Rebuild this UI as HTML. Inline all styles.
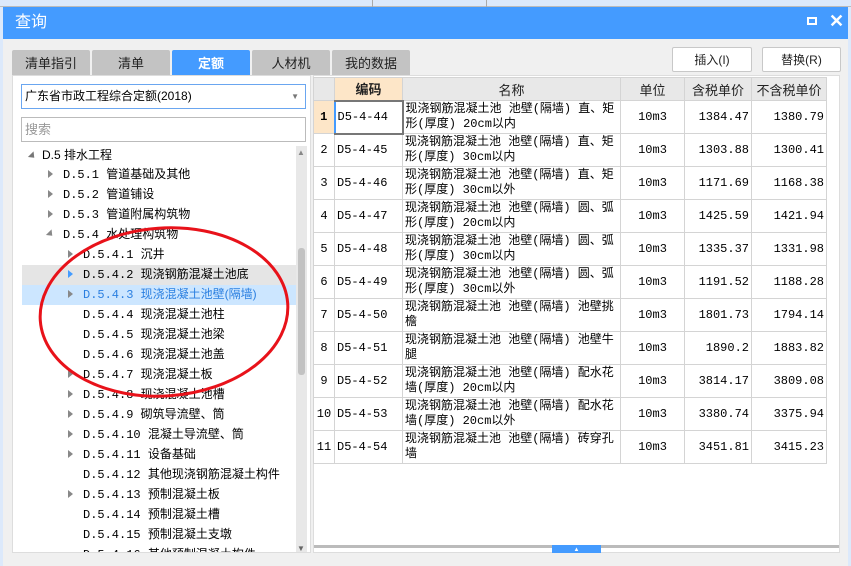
<!DOCTYPE html>
<html><head><meta charset="utf-8"><style>
*{margin:0;padding:0;box-sizing:border-box}
body{width:851px;height:566px;position:relative;overflow:hidden;background:#dce9fb;font-family:"Liberation Sans","Noto Sans CJK SC",sans-serif;font-size:12px;color:#000}
.abs{position:absolute}
#dlg{left:3px;top:7px;width:845px;height:559px;background:#f0f0f0}
#title{left:3px;top:7px;width:845px;height:32px;background:#449bff;color:#fff;font-size:16px;line-height:32px;padding-left:12px}
.tab{top:50px;height:25px;width:78px;background:#c3c3c3;text-align:center;line-height:27px;font-size:13px;color:#222;border-radius:2px 2px 0 0}
.btn{top:47px;height:25px;background:#fff;border:1px solid #c8c8c8;border-radius:2px;text-align:center;line-height:24px;font-size:12px;color:#222}
#lp{left:12px;top:75px;width:299px;height:478px;background:#fff;border:1px solid #ddd}
.tr{position:absolute;left:22px;width:274px;height:20px;line-height:20px;font-family:"Liberation Mono","Noto Sans CJK SC",monospace;font-size:12px;white-space:nowrap}
.tr span{font-family:"Liberation Sans","Noto Sans CJK SC",sans-serif}
.ar{position:absolute;width:0;height:0;border-left:5px solid #888;border-top:4px solid transparent;border-bottom:4px solid transparent;top:6px}
table{border-collapse:collapse;position:absolute;left:313px;top:77px;table-layout:fixed}
td{border:1px solid #d4d4d4;height:33px;font-family:"Liberation Mono","Noto Sans CJK SC",monospace;font-size:12px;line-height:15px;padding:0 2px;vertical-align:middle;overflow:hidden}
th{border:1px solid #d4d4d4;height:23px;background:#e8e8e8;font-weight:normal;font-size:13px;color:#222}
td.n{text-align:center;background:#fff}
td.r{text-align:right}
td.c{text-align:center}
</style></head><body>
<div class="abs" style="left:0;top:0;width:851px;height:7px;background:#dce9fb;border-bottom:1px solid #bbb"></div>
<div class="abs" style="left:372px;top:0;width:1px;height:7px;background:#aaa"></div>
<div class="abs" style="left:486px;top:0;width:1px;height:7px;background:#aaa"></div>
<div class="abs" id="dlg"></div>
<div class="abs" id="title">查询</div>
<div class="abs" style="left:807px;top:17px;width:10px;height:8px;border:2px solid #fff"></div>
<div class="abs" style="left:829px;top:10px;color:#fff;font-size:18px;font-weight:bold;line-height:22px">✕</div>
<div class="abs tab" style="left:12px">清单指引</div>
<div class="abs tab" style="left:92px">清单</div>
<div class="abs tab" style="left:172px;background:#449bff;color:#fff;font-weight:bold">定额</div>
<div class="abs tab" style="left:252px">人材机</div>
<div class="abs tab" style="left:332px">我的数据</div>
<div class="abs btn" style="left:672px;width:80px">插入(I)</div>
<div class="abs btn" style="left:762px;width:79px">替换(R)</div>
<div class="abs" id="lp"></div>
<div class="abs" style="left:21px;top:84px;width:285px;height:25px;border:1px solid #6aa6f0;background:#fff;line-height:23px;padding-left:3px;font-size:12px">广东省市政工程综合定额(2018)<span style="position:absolute;right:6px;top:0;color:#777;font-size:8px">▼</span></div>
<div class="abs" style="left:21px;top:117px;width:285px;height:25px;border:1px solid #bbb;background:#fff;line-height:23px;padding-left:3px;color:#999;font-size:13px">搜索</div>
<div class="abs" style="left:22px;top:265px;width:274px;height:20px;background:#e5e5e5"></div>
<div class="abs" style="left:22px;top:285px;width:274px;height:20px;background:#cce6ff"></div>
<div class="abs" style="left:296px;top:146px;width:11px;height:406px;background:#e8e8e8"></div>
<div class="abs" style="left:298px;top:248px;width:7px;height:127px;background:#c2c2c2;border-radius:3px"></div>
<div class="abs" style="left:297px;top:148px;color:#888;font-size:8px">▲</div>
<div class="abs" style="left:297px;top:544px;color:#666;font-size:8px">▼</div>
<div class="tr" style="top:145px;left:30px"><i class="ar" style="transform:rotate(45deg);left:0;top:7px;border-left-color:#777"></i><span style="position:absolute;left:12px">D.5 排水工程</span></div>
<div class="tr" style="top:165px"></div>
<script></script>
<div class="tr" style="top:164px;left:48px"><i class="ar"></i><b style="font-weight:normal;position:absolute;left:15px">D.5.1 <span>管道基础及其他</span></b></div>
<div class="tr" style="top:184px;left:48px"><i class="ar"></i><b style="font-weight:normal;position:absolute;left:15px">D.5.2 <span>管道铺设</span></b></div>
<div class="tr" style="top:204px;left:48px"><i class="ar"></i><b style="font-weight:normal;position:absolute;left:15px">D.5.3 <span>管道附属构筑物</span></b></div>
<div class="tr" style="top:224px;left:48px"><i class="ar" style="transform:rotate(45deg)"></i><b style="font-weight:normal;position:absolute;left:15px">D.5.4 <span>水处理构筑物</span></b></div>
<div class="tr" style="top:244px;left:68px"><i class="ar"></i><b style="font-weight:normal;position:absolute;left:15px">D.5.4.1 <span>沉井</span></b></div>
<div class="tr" style="top:264px;left:68px"><i class="ar" style="border-left-color:#449bff"></i><b style="font-weight:normal;position:absolute;left:15px">D.5.4.2 <span>现浇钢筋混凝土池底</span></b></div>
<div class="tr" style="top:284px;left:68px;color:#2a7fe0"><i class="ar"></i><b style="font-weight:normal;position:absolute;left:15px">D.5.4.3 <span>现浇混凝土池壁(隔墙)</span></b></div>
<div class="tr" style="top:304px;left:68px"><b style="font-weight:normal;position:absolute;left:15px">D.5.4.4 <span>现浇混凝土池柱</span></b></div>
<div class="tr" style="top:324px;left:68px"><b style="font-weight:normal;position:absolute;left:15px">D.5.4.5 <span>现浇混凝土池梁</span></b></div>
<div class="tr" style="top:344px;left:68px"><b style="font-weight:normal;position:absolute;left:15px">D.5.4.6 <span>现浇混凝土池盖</span></b></div>
<div class="tr" style="top:364px;left:68px"><i class="ar"></i><b style="font-weight:normal;position:absolute;left:15px">D.5.4.7 <span>现浇混凝土板</span></b></div>
<div class="tr" style="top:384px;left:68px"><i class="ar"></i><b style="font-weight:normal;position:absolute;left:15px">D.5.4.8 <span>现浇混凝土池槽</span></b></div>
<div class="tr" style="top:404px;left:68px"><i class="ar"></i><b style="font-weight:normal;position:absolute;left:15px">D.5.4.9 <span>砌筑导流壁、筒</span></b></div>
<div class="tr" style="top:424px;left:68px"><i class="ar"></i><b style="font-weight:normal;position:absolute;left:15px">D.5.4.10 <span>混凝土导流壁、筒</span></b></div>
<div class="tr" style="top:444px;left:68px"><i class="ar"></i><b style="font-weight:normal;position:absolute;left:15px">D.5.4.11 <span>设备基础</span></b></div>
<div class="tr" style="top:464px;left:68px"><b style="font-weight:normal;position:absolute;left:15px">D.5.4.12 <span>其他现浇钢筋混凝土构件</span></b></div>
<div class="tr" style="top:484px;left:68px"><i class="ar"></i><b style="font-weight:normal;position:absolute;left:15px">D.5.4.13 <span>预制混凝土板</span></b></div>
<div class="tr" style="top:504px;left:68px"><b style="font-weight:normal;position:absolute;left:15px">D.5.4.14 <span>预制混凝土槽</span></b></div>
<div class="tr" style="top:524px;left:68px"><b style="font-weight:normal;position:absolute;left:15px">D.5.4.15 <span>预制混凝土支墩</span></b></div>
<div class="tr" style="top:544px;left:68px;height:8px;overflow:hidden"><b style="font-weight:normal;position:absolute;left:15px">D.5.4.16 <span>其他预制混凝土构件</span></b></div>
<div class="abs" style="left:313px;top:75px;width:527px;height:478px;background:#fff;border:1px solid #ddd"></div>
<table>
<colgroup><col style="width:21px"><col style="width:68px"><col style="width:218px"><col style="width:64px"><col style="width:67px"><col style="width:75px"></colgroup>
<tr><th></th><th style="background:#fde6c8;font-weight:bold">编码</th><th>名称</th><th>单位</th><th>含税单价</th><th>不含税单价</th></tr>
<tr><td class="n" style="background:#fde6c8;font-weight:bold">1</td><td style="border:2px solid #777;border-left-color:#449bff">D5-4-44</td><td>现浇钢筋混凝土池 池壁(隔墙) 直、矩形(厚度) 20cm以内</td><td class="c">10m3</td><td class="r">1384.47</td><td class="r">1380.79</td></tr>
<tr><td class="n">2</td><td>D5-4-45</td><td>现浇钢筋混凝土池 池壁(隔墙) 直、矩形(厚度) 30cm以内</td><td class="c">10m3</td><td class="r">1303.88</td><td class="r">1300.41</td></tr>
<tr><td class="n">3</td><td>D5-4-46</td><td>现浇钢筋混凝土池 池壁(隔墙) 直、矩形(厚度) 30cm以外</td><td class="c">10m3</td><td class="r">1171.69</td><td class="r">1168.38</td></tr>
<tr><td class="n">4</td><td>D5-4-47</td><td>现浇钢筋混凝土池 池壁(隔墙) 圆、弧形(厚度) 20cm以内</td><td class="c">10m3</td><td class="r">1425.59</td><td class="r">1421.94</td></tr>
<tr><td class="n">5</td><td>D5-4-48</td><td>现浇钢筋混凝土池 池壁(隔墙) 圆、弧形(厚度) 30cm以内</td><td class="c">10m3</td><td class="r">1335.37</td><td class="r">1331.98</td></tr>
<tr><td class="n">6</td><td>D5-4-49</td><td>现浇钢筋混凝土池 池壁(隔墙) 圆、弧形(厚度) 30cm以外</td><td class="c">10m3</td><td class="r">1191.52</td><td class="r">1188.28</td></tr>
<tr><td class="n">7</td><td>D5-4-50</td><td>现浇钢筋混凝土池 池壁(隔墙) 池壁挑檐</td><td class="c">10m3</td><td class="r">1801.73</td><td class="r">1794.14</td></tr>
<tr><td class="n">8</td><td>D5-4-51</td><td>现浇钢筋混凝土池 池壁(隔墙) 池壁牛腿</td><td class="c">10m3</td><td class="r">1890.2</td><td class="r">1883.82</td></tr>
<tr><td class="n">9</td><td>D5-4-52</td><td>现浇钢筋混凝土池 池壁(隔墙) 配水花墙(厚度) 20cm以内</td><td class="c">10m3</td><td class="r">3814.17</td><td class="r">3809.08</td></tr>
<tr><td class="n">10</td><td>D5-4-53</td><td>现浇钢筋混凝土池 池壁(隔墙) 配水花墙(厚度) 20cm以外</td><td class="c">10m3</td><td class="r">3380.74</td><td class="r">3375.94</td></tr>
<tr><td class="n">11</td><td>D5-4-54</td><td>现浇钢筋混凝土池 池壁(隔墙) 砖穿孔墙</td><td class="c">10m3</td><td class="r">3451.81</td><td class="r">3415.23</td></tr>
</table>
<div class="abs" style="left:314px;top:545px;width:525px;height:3px;background:#bbb"></div>
<div class="abs" style="left:552px;top:545px;width:49px;height:8px;background:#449bff;color:#fff;font-size:6px;text-align:center;line-height:10px">▲</div>
<svg class="abs" style="left:0;top:0" width="851" height="566"><ellipse cx="164" cy="312" rx="124" ry="84" transform="rotate(-4 164 312)" fill="none" stroke="#e8121a" stroke-width="3"/></svg>
</body></html>
